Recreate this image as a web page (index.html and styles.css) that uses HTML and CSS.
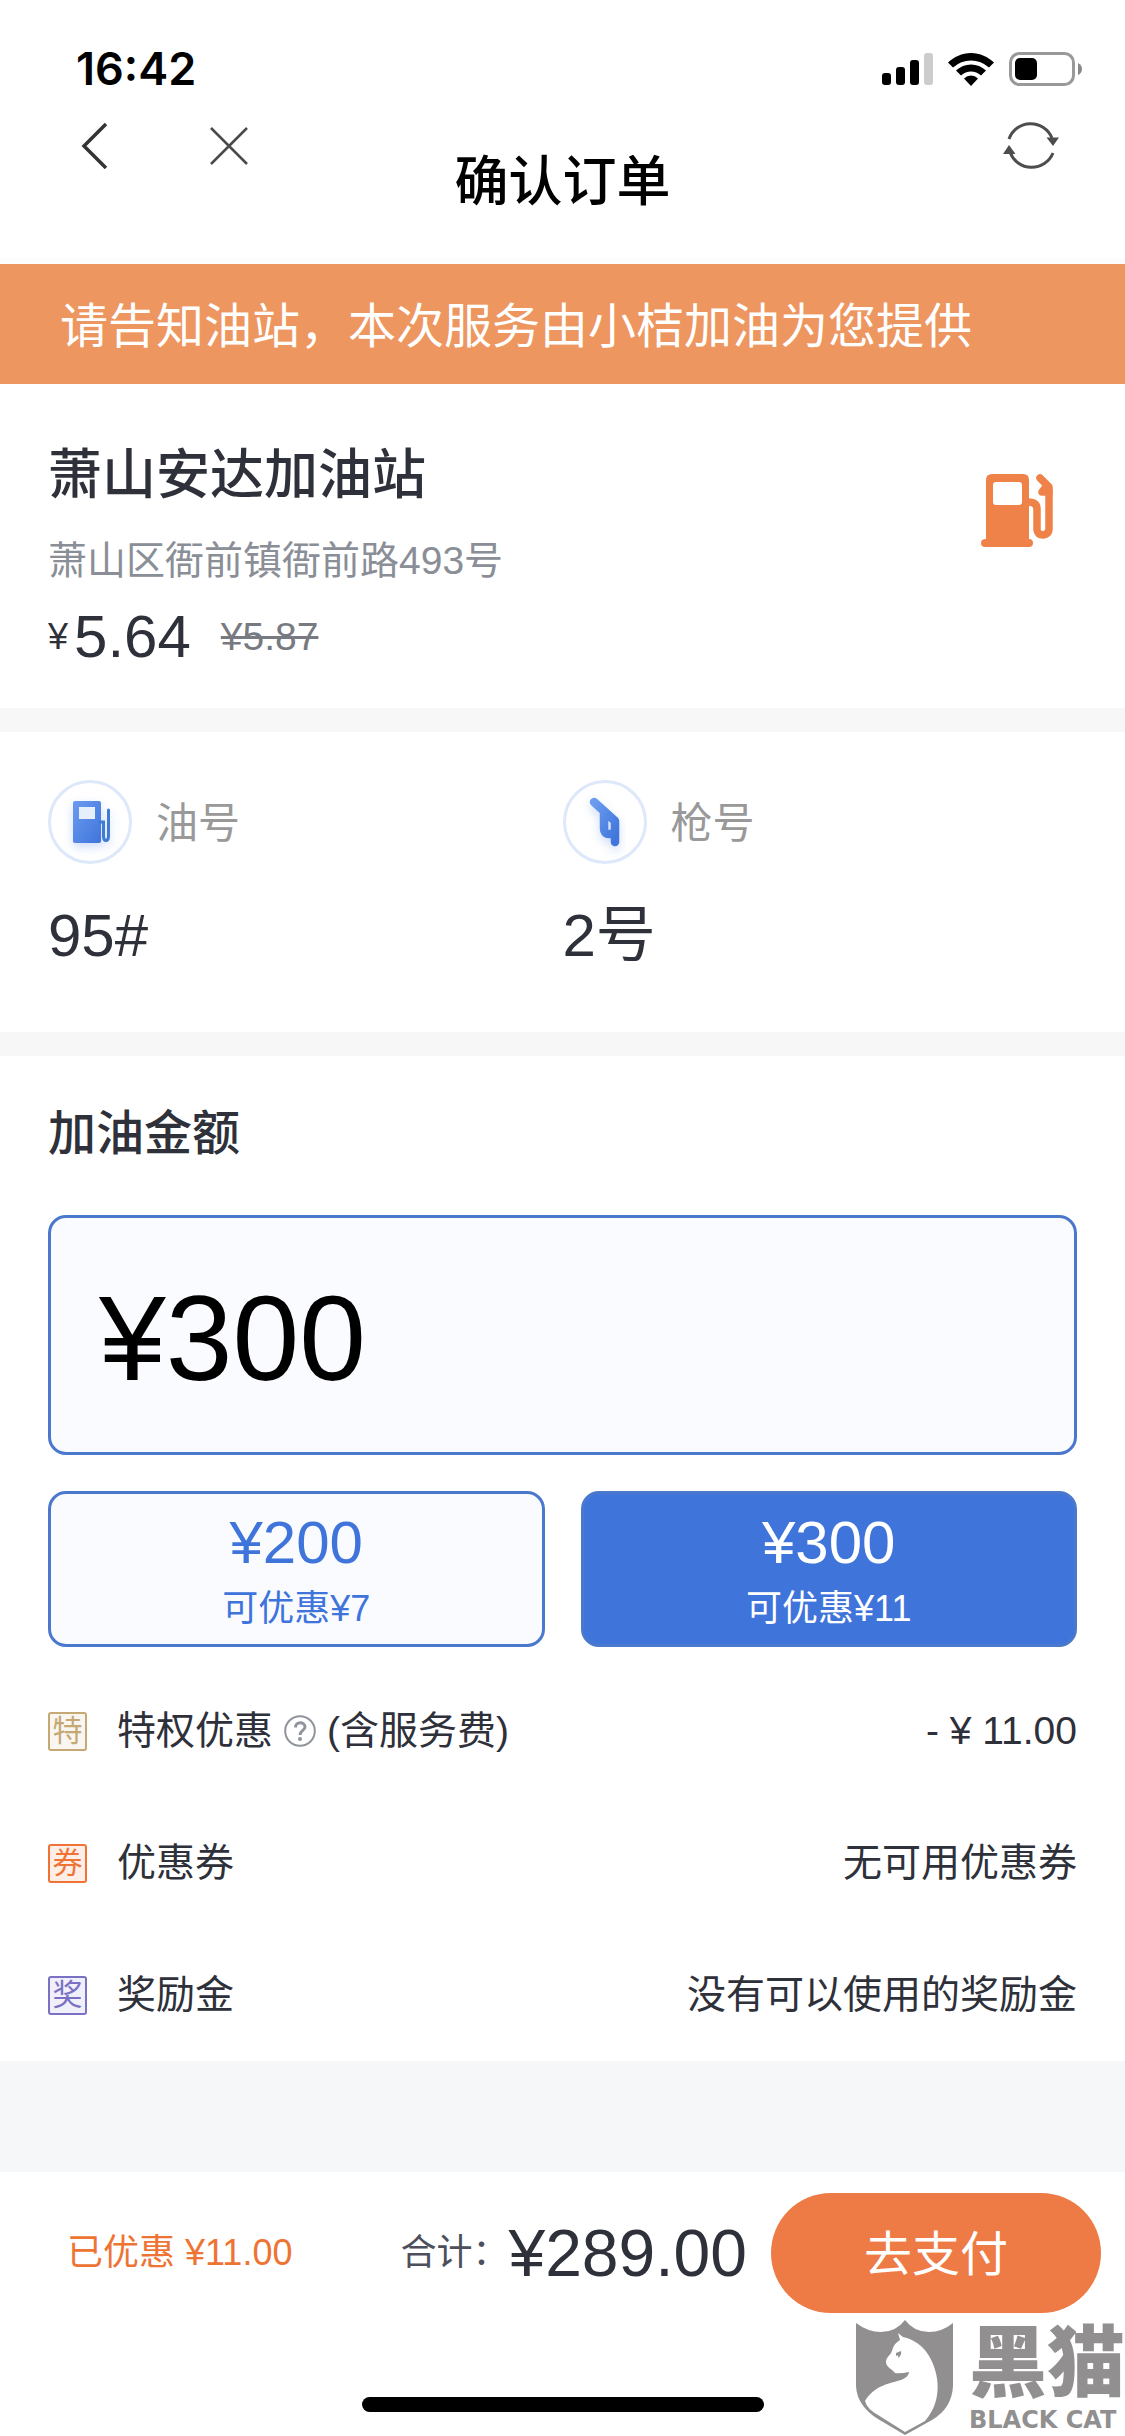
FILE: index.html
```html
<!DOCTYPE html>
<html lang="zh-CN">
<head>
<meta charset="utf-8">
<meta name="viewport" content="width=device-width, initial-scale=1">
<title>确认订单</title>
<link rel="stylesheet" href="styles.css">
</head>
<body>
<div class="page">
  <div class="status-bar">
    <span class="time">16:42</span>
    <div class="status-icons">
      <svg width="51" height="32" viewBox="0 0 51 32" aria-hidden="true"><rect x="0" y="20" width="9" height="12" rx="3"/><rect x="14" y="14" width="9" height="18" rx="3"/><rect x="28" y="7" width="9" height="25" rx="3"/><rect x="42" y="0" width="9" height="32" rx="3" fill="#ccc"/></svg>
      <svg width="46" height="33" viewBox="0 0 46 33" aria-hidden="true"><path d="M23 0C32 0 40 4 46 9.500L41 14.500Q33 7.500 23 7.500T5 14.500L0 9.500C6 4 14 0 23 0Z"/><path d="M23 11.500Q31.500 11.500 38 17.500L33 22.500Q28.500 18.500 23 18.500T13 22.500L8 17.500Q14.500 11.500 23 11.500Z"/><path d="M23 22.500Q27 22.500 30 25.500L23 33L16 25.500Q19 22.500 23 22.500Z"/></svg>
      <svg width="74" height="34" viewBox="0 0 74 34" aria-hidden="true"><rect x="1.500" y="1.500" width="63" height="31" rx="9" fill="none" stroke="#999" stroke-width="3"/><rect x="6" y="6" width="22" height="22" rx="5"/><path d="M69 11Q73 13 73 17T69 23Z" fill="#888"/></svg>
    </div>
  </div>

  <header class="nav-bar">
    <div class="nav-side nav-side-start">
      <button class="icon-button" type="button" aria-label="返回"><svg width="28" height="46" viewBox="0 0 28 46"><path d="M26 1L4 23L26 45" fill="none" stroke="#333" stroke-width="3.500"/></svg></button>
      <button class="icon-button" type="button" aria-label="关闭"><svg width="38" height="38" viewBox="0 0 38 38"><path d="M1 1L37 37M37 1L1 37" fill="none" stroke="#4a4a4a" stroke-width="2.500"/></svg></button>
    </div>
    <h1 class="nav-title">确认订单</h1>
    <div class="nav-side nav-side-end">
      <button class="icon-button" type="button" aria-label="刷新"><svg width="56" height="50" viewBox="0 0 56 50"><path d="M6 18A23 23 0 0 1 49 17M50 32A23 23 0 0 1 7 31" fill="none" stroke="#4d4d4d" stroke-width="3"/><path d="M43.500 16.500H56L50 25ZM0 33H12.500L6 24Z" fill="#4d4d4d"/></svg></button>
    </div>
  </header>

  <p class="notice">请告知油站，本次服务由小桔加油为您提供</p>

  <main>
    <section class="station">
      <div>
        <h2 class="station-name">萧山安达加油站</h2>
        <p class="station-address">萧山区衙前镇衙前路493号</p>
        <p class="station-price"><span class="currency">¥</span><span class="price">5.64</span><del class="old-price">¥5.87</del></p>
      </div>
      <svg class="station-icon" width="74" height="74" viewBox="0 0 74 74" aria-hidden="true"><path fill="#ef8248" fill-rule="evenodd" d="M11 0H42Q48 0 48 6V65Q52 65 52 69Q52 73 48 73H4Q0 73 0 69Q0 65 5 65V6Q5 0 11 0ZM15 8Q12 8 12 11V28Q12 31 15 31H38Q41 31 41 28V11Q41 8 38 8Z"/><path d="M47 28Q56 28 56 35V56Q57 61 62 61Q68 60 68 55V16" fill="none" stroke="#ef8248" stroke-width="7.500"/><path d="M59 4L68 13V18H61L64 14" fill="none" stroke="#ef8248" stroke-width="7.500" stroke-linecap="round" stroke-linejoin="round"/></svg>
    </section>

    <dl class="pump">
      <div>
        <dt class="pump-label">
          <svg width="84" height="84" viewBox="0 0 84 84" aria-hidden="true"><defs><linearGradient id="blue" x1="0" y1="0" x2="1" y2="1"><stop offset="0" stop-color="#6c9cf0"/><stop offset="1" stop-color="#3f74db"/></linearGradient><filter id="glow" x="-50%" y="-50%" width="200%" height="200%"><feDropShadow dx="0" dy="4" stdDeviation="5" flood-color="#3f74db" flood-opacity=".25"/></filter></defs><circle cx="42" cy="42" r="40.500" fill="#fff" stroke="#dde8fa" stroke-width="3"/><g filter="url(#glow)"><rect x="25" y="21" width="28" height="42" rx="2" fill="url(#blue)"/><rect x="31" y="27" width="16" height="12" fill="#e8effc"/><path d="M52 42H55.500V56Q55.500 60.500 58 60.500Q60.500 60.500 60.500 56V30" fill="none" stroke="#3f7bd6" stroke-width="3" stroke-linecap="round"/></g></svg>
          <span>油号</span>
        </dt>
        <dd class="pump-value">95#</dd>
      </div>
      <div>
        <dt class="pump-label">
          <svg width="84" height="84" viewBox="0 0 84 84" aria-hidden="true"><circle cx="42" cy="42" r="40.500" fill="#fff" stroke="#dde8fa" stroke-width="3"/><g filter="url(#glow)"><path d="M31 22L52 41V62M41 32V48Q41 54 46 54H52" fill="none" stroke="url(#blue)" stroke-width="8.500" stroke-linecap="round" stroke-linejoin="round"/></g></svg>
          <span>枪号</span>
        </dt>
        <dd class="pump-value">2号</dd>
      </div>
    </dl>

    <section class="amount">
      <h2 class="amount-title"><label for="amount">加油金额</label></h2>
      <input class="amount-input" id="amount" type="text" value="¥300">
      <div class="presets">
        <button class="preset" type="button"><span class="preset-value">¥200</span><span class="preset-note">可优惠¥7</span></button>
        <button class="preset preset-active" type="button"><span class="preset-value">¥300</span><span class="preset-note">可优惠¥11</span></button>
      </div>
      <ul class="discounts">
        <li class="discount">
          <span class="badge badge-gold">特</span>
          <span class="discount-name">特权优惠
            <svg width="32" height="32" viewBox="0 0 32 32" aria-hidden="true"><g fill="none" stroke="#8f939b"><circle cx="16" cy="16" r="14.800" stroke-width="2"/><path d="M11.500 12.500C11.500 6 21 6.500 21 12C21 15.500 16 15.500 16 20" stroke-width="3"/></g><circle cx="16" cy="24" r="2" fill="#8f939b"/></svg>
            (含服务费)</span>
          <span>- ¥ 11.00</span>
        </li>
        <li class="discount">
          <span class="badge badge-orange">券</span>
          <span class="discount-name">优惠券</span>
          <span>无可用优惠券</span>
        </li>
        <li class="discount">
          <span class="badge badge-purple">奖</span>
          <span class="discount-name">奖励金</span>
          <span>没有可以使用的奖励金</span>
        </li>
      </ul>
    </section>
  </main>

  <footer class="footer">
    <div class="checkout">
      <span class="saved">已优惠 ¥11.00</span>
      <span class="total-label">合计：</span>
      <span class="total">¥289.00</span>
      <button class="pay" type="button">去支付</button>
    </div>
    <div class="home-indicator"></div>
    <div class="watermark">
      <svg width="98" height="116" viewBox="0 0 98 116" aria-hidden="true"><path fill="#918f90" d="M0 3Q12 12 25 12Q40 12 49 0Q58 12 73 12Q86 12 97 3V66Q96 88 76 100L49 115L22 99Q1 86 0 66Z"/><path fill="#fff" d="M42 13L47 17C62 20 72 31 77 44C85 64 83 85 69 101L49 112L22 95Q11 89 9 81C18 65 36 63 45 60C50 58 53 55 53 52Q44 54 39 53C36 49 30 47 30 42C30 37 34 36 36 31C38 24 40 23 44 20Z"/><path fill="#918f90" d="M40 33L45 31Q46 35 42 38Q43 34 40 36Z"/></svg>
      <div class="watermark-text"><span class="watermark-name">黑猫</span><span class="watermark-latin">BLACK CAT</span></div>
    </div>
  </footer>
</div>
</body>
</html>
```
FILE: styles.css
```css
* {
  box-sizing: border-box;
  margin: 0;
  padding: 0;
}

body {
  background: #fff;
  color: #2e303a;
  font-family: "Liberation Sans", "Noto Sans CJK SC", sans-serif;
  font-size: 39px;
  line-height: 60px;
}

svg {
  display: block;
  flex: none;
}

button,
input {
  font: inherit;
  color: inherit;
}

button {
  border: 0;
  background: none;
  cursor: pointer;
}

.page {
  display: flex;
  flex-direction: column;
  min-height: 100vh;
}

.status-bar {
  display: flex;
  align-items: center;
  justify-content: space-between;
  height: 114px;
  padding: 24px 42px 0 76px;
}

.time {
  color: #000;
  font-family: Inter, sans-serif;
  font-size: 45px;
  font-weight: 600;
}

.status-icons {
  display: flex;
  align-items: center;
  gap: 15px;
}

.nav-bar {
  display: grid;
  grid-template-columns: 1fr auto 1fr;
  align-items: start;
  height: 150px;
  padding: 0 66px;
  border-bottom: 6px solid #fcfcfc;
}

.nav-side {
  display: flex;
  align-items: center;
  gap: 102px;
  height: 64px;
}

.nav-side-start {
  padding-left: 14px;
}

.nav-side-end {
  justify-content: flex-end;
}

.icon-button {
  display: block;
}

.nav-title {
  padding-top: 38px;
  color: #000;
  font-size: 54px;
  font-weight: 500;
}

.notice {
  padding: 33px 60px 27px;
  background: #ed9660;
  color: #fff;
  font-size: 48px;
}

.station {
  display: flex;
  align-items: flex-start;
  justify-content: space-between;
  padding: 61px 70px 41px 48px;
}

.station-name {
  margin-bottom: 26px;
  font-size: 54px;
  font-weight: 500;
}

.station-address {
  margin-bottom: 16px;
  color: #8a8e96;
}

.station-icon {
  margin-top: 29px;
}

.station-price {
  display: flex;
  align-items: center;
}

.currency {
  font-size: 36px;
}

.price {
  margin: 0 30px 0 6px;
  font-size: 60px;
}

.old-price {
  color: #777a80;
}

.pump {
  display: grid;
  grid-template-columns: 1fr 1fr;
  padding: 48px 48px 66px;
  border-top: 24px solid #f7f7f8;
  border-bottom: 24px solid #f7f7f8;
}

.pump-label {
  display: flex;
  align-items: center;
  gap: 24px;
  margin-bottom: 42px;
  color: #999;
  font-size: 42px;
}

.pump-label span {
  padding-top: 4px;
}

.pump-value {
  font-size: 60px;
}

.amount {
  padding: 48px 48px 0;
}

.amount-title {
  margin-bottom: 51px;
  font-size: 48px;
  font-weight: 500;
}

.amount-input {
  display: block;
  width: 100%;
  height: 240px;
  margin-bottom: 36px;
  padding: 6px 48px 0;
  border: 3px solid #4a78cc;
  border-radius: 18px;
  background: #fafbff;
  color: #000;
  font-size: 120px;
}

.presets {
  display: grid;
  grid-template-columns: 1fr 1fr;
  gap: 36px;
}

.preset {
  display: flex;
  flex-direction: column;
  align-items: center;
  justify-content: center;
  gap: 6px;
  height: 156px;
  padding-top: 14px;
  border: 3px solid #4a78cc;
  border-radius: 18px;
  background: #fafbff;
  color: #3f74db;
}

.preset-active {
  background: #3f74db;
  color: #fff;
}

.preset-value {
  font-size: 60px;
}

.preset-note {
  font-size: 36px;
}

.discounts {
  padding: 18px 0 0;
  list-style: none;
}

.discount {
  display: flex;
  align-items: center;
  justify-content: space-between;
  height: 132px;
}

.badge {
  display: flex;
  align-items: center;
  justify-content: center;
  width: 39px;
  height: 39px;
  margin-right: 30px;
  border: 2px solid;
  border-radius: 3px;
  font-size: 30px;
}

.badge-gold {
  background: #f9f6f1;
  color: #c5a874;
}

.badge-orange {
  background: #fdeee7;
  color: #f07335;
}

.badge-purple {
  background: #f0effa;
  color: #7a70c4;
}

.discount-name {
  display: flex;
  flex: 1;
  align-items: center;
  gap: 11px;
}

.footer {
  position: relative;
  display: flex;
  flex: 1;
  flex-direction: column;
  align-items: center;
  justify-content: space-between;
  padding: 21px 0 24px;
  border-top: 111px solid #f6f7f9;
}

.checkout {
  display: flex;
  align-items: center;
  align-self: stretch;
  padding: 0 24px 0 67px;
  font-size: 36px;
}

.saved {
  flex: 1;
  color: #ee7434;
}

.total-label {
  color: #4d505c;
}

.total {
  margin-right: 24px;
  font-size: 66px;
}

.pay {
  width: 330px;
  height: 120px;
  padding-top: 3px;
  border-radius: 60px;
  background: #ee7a45;
  color: #fff;
  font-size: 48px;
}

.home-indicator {
  width: 402px;
  height: 15px;
  border-radius: 8px;
  background: #000;
}

.watermark {
  position: absolute;
  right: 0;
  bottom: 0;
  display: flex;
  align-items: center;
  gap: 15px;
  color: #918f90;
}

.watermark-text {
  display: flex;
  flex-direction: column;
}

.watermark-name {
  font-size: 78px;
  font-weight: 900;
  line-height: 84px;
}

.watermark-latin {
  font-family: "DejaVu Sans", sans-serif;
  font-size: 24px;
  font-weight: 700;
  line-height: 28px;
}
```
